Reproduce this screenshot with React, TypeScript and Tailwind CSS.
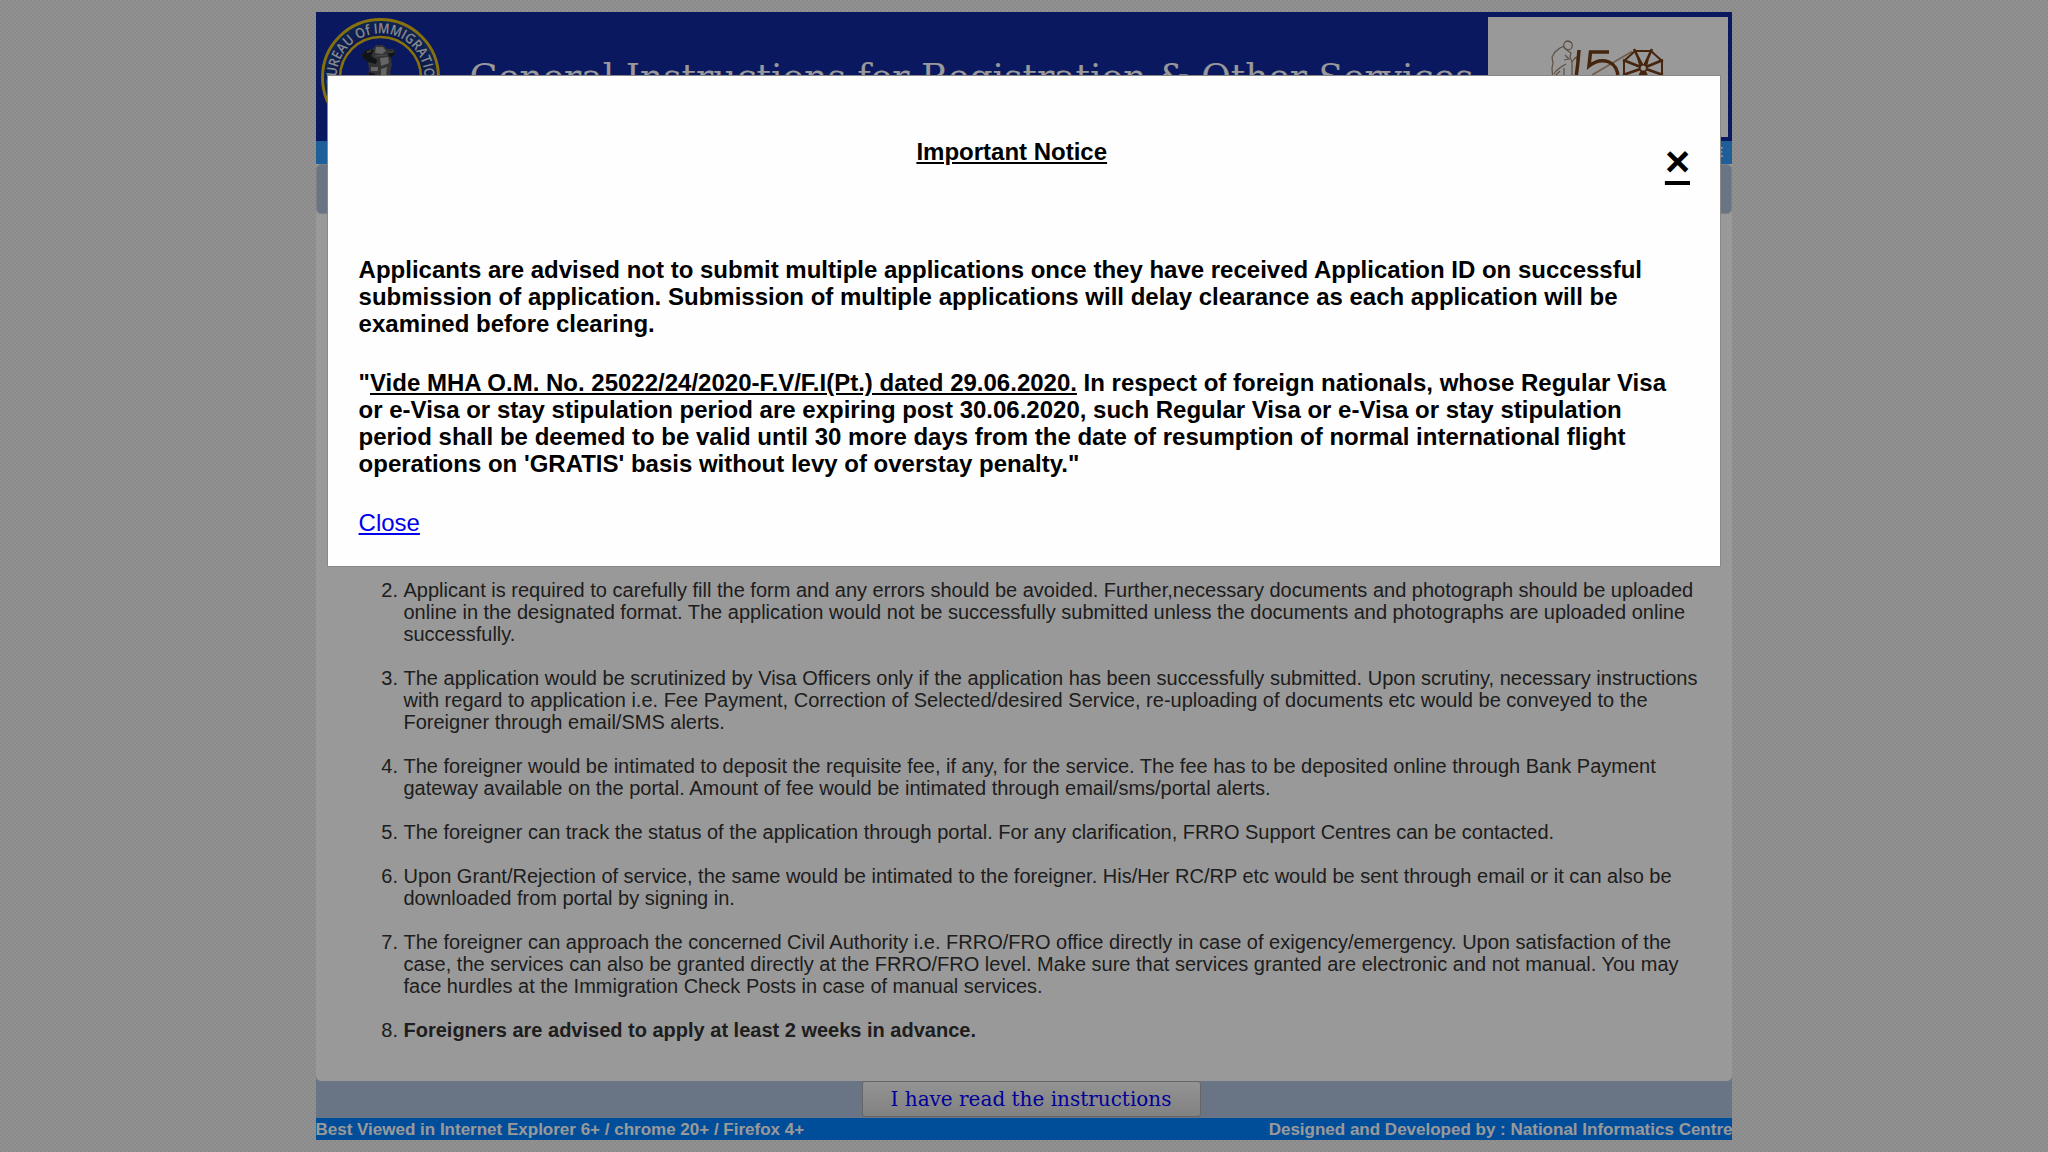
const items: { n: number; lines: string[]; bold?: boolean }[] = [
  { n: 2, lines: ["Applicant is required to carefully fill the form and any errors should be avoided. Further,necessary documents and photograph should be uploaded", "online in the designated format. The application would not be successfully submitted unless the documents and photographs are uploaded online", "successfully."] },
  { n: 3, lines: ["The application would be scrutinized by Visa Officers only if the application has been successfully submitted. Upon scrutiny, necessary instructions", "with regard to application i.e. Fee Payment, Correction of Selected/desired Service, re-uploading of documents etc would be conveyed to the", "Foreigner through email/SMS alerts."] },
  { n: 4, lines: ["The foreigner would be intimated to deposit the requisite fee, if any, for the service. The fee has to be deposited online through Bank Payment", "gateway available on the portal. Amount of fee would be intimated through email/sms/portal alerts."] },
  { n: 5, lines: ["The foreigner can track the status of the application through portal. For any clarification, FRRO Support Centres can be contacted."] },
  { n: 6, lines: ["Upon Grant/Rejection of service, the same would be intimated to the foreigner. His/Her RC/RP etc would be sent through email or it can also be", "downloaded from portal by signing in."] },
  { n: 7, lines: ["The foreigner can approach the concerned Civil Authority i.e. FRRO/FRO office directly in case of exigency/emergency. Upon satisfaction of the", "case, the services can also be granted directly at the FRRO/FRO level. Make sure that services granted are electronic and not manual. You may", "face hurdles at the Immigration Check Posts in case of manual services."] },
  { n: 8, lines: ["Foreigners are advised to apply at least 2 weeks in advance."], bold: true },
];

function Seal() {
  return (
    <svg className="ml-[5px] mt-[6px] h-[119px] w-[119px] shrink-0" viewBox="0 0 119 119">
      <defs>
        <path id="sealArc" d="M18.200 74.500 A44 44 0 1 1 100.800 74.500" />
        <radialGradient id="sealFill">
          <stop offset="0.7" stopColor="#14287f" />
          <stop offset="1" stopColor="#1c3f88" />
        </radialGradient>
        <filter id="soft"><feGaussianBlur stdDeviation="0.7" /></filter>
      </defs>
      <circle cx="59.500" cy="59.500" r="58" fill="url(#sealFill)" stroke="#e0bd18" strokeWidth="2.900" />
      <circle cx="59.500" cy="59.500" r="40.500" fill="#1228a0" stroke="#e0bd18" strokeWidth="2.600" />
      <text fill="#e2e6ee" fontFamily="Open Sans" fontWeight="600" fontSize="14">
        <textPath href="#sealArc" startOffset="50.8%" textAnchor="middle" textLength="156" lengthAdjust="spacingAndGlyphs">BUREAU Of IMMIGRATION</textPath>
      </text>
      <g filter="url(#soft)">
        <path d="M41 36 L46 31 L52 31 L55 27 L62 27 L66 31 L72 31 L75 35 L70 40 L71 47 L69 54 L71 62 L46 62 L48 52 L47 44 L42 40 Z" fill="#555" />
        <path d="M41 36 L46 31 L53 32 L50 38 L56 42 L55 46 L47 44 L42 40 Z M69 32 L75 35 L70 40 L67 37 Z M48 54 L54 56 L54 62 L46 62 Z" fill="#1d2027" />
        <path d="M55 29 L62 29 L65 33 L61 36 L54 35 Z M59 40 L67 39 L68 45 L60 48 Z M50 49 L57 49 L57 53 L50 53 Z M60 51 L66 49 L65 58 L60 58 Z" fill="#a8a8a8" />
        <path d="M46 34 L50 33 M68 34 L72 34 M54 38 L66 37" stroke="#777" strokeWidth="1.500" fill="none" />
      </g>
    </svg>
  );
}

function Anniversary() {
  return (
    <svg className="h-[120px] w-[240px]" viewBox="0 0 240 120">
      <g fill="none" stroke="#9b846f" strokeWidth="1.200">
        <circle cx="80" cy="28.500" r="4.300" />
        <path d="M77 24.500 L80 24 L84 26 M76 29 L72 31 L67 35 L64 40 L65 46 L64 51 L64.500 58 M76 30 L80 34 L83 36 L82 40 L84 45 L84 58 M84 45 L87 41 L92 38 M87 41 L91 43 M77 38 L81 42 L76 43 M78 47 L73 50 L68 54 L66 57 M76 51 L76 58 M72 54 L67 59" />
      </g>
      <path d="M104 58 L144 34.500" stroke="#ba9d80" strokeWidth="1.700" />
      <path d="M91 33 Q90 47 88 61 M121 35 H102.500 L101 49 Q111 41 121 45 Q130 49 130 61" fill="none" stroke="#763f1a" strokeWidth="3.500" />
      <g fill="none" stroke="#763f1a" strokeWidth="2">
        <path d="M147 34 H163 L174 44 V57 L163 69 H147 L136 57 V44 Z" />
        <path d="M146 32 L155.300 51 L164 32 M135 43 L155.300 51 L175 43 M135 58 L155.300 51 L175 58 M155.300 51 L147 69 M155.300 51 L163 69" strokeWidth="2.600" />
      </g>
      <path d="M147.500 35 L151.500 50 L155.500 47.500 Z M162.500 35 L155.500 47.500 L159 50 Z M154 53 L149 65 H162 L157 53 Z" fill="#763f1a" />
      <circle cx="155.300" cy="51" r="4" fill="#763f1a" />
      <circle cx="155.300" cy="51" r="2.600" fill="white" />
    </svg>
  );
}

export default function App() {
  return (
    <div className="relative h-[1152px] w-full overflow-hidden bg-[#efefef] bg-[repeating-conic-gradient(#e6e6e6_0_25%,#f3f3f3_0_50%)] bg-[length:4px_4px] pt-[12px] font-['Liberation_Sans',sans-serif]">
      <div className="mx-auto flex w-[1416px] flex-col">
        <header className="flex h-[129px] bg-[#1228a0]">
          <Seal />
          <h1 className="ml-[29.500px] mt-[43px] w-[1018.500px] shrink-0 whitespace-nowrap font-['DejaVu_Serif',serif] text-[36px] leading-[44px] text-white">
            General Instructions for Registration &amp; Other Services
          </h1>
          <div className="mt-[5px] h-[120px] w-[240px] shrink-0 bg-white">
            <Anniversary />
          </div>
        </header>
        <nav className="flex h-[23px] items-center justify-end bg-[#329dff] pr-[9px] text-[14px] font-bold text-white">HOME</nav>
        <div className="h-[917px] bg-[#b0c4de]">
          <div className="h-[50px] bg-white">
            <div className="h-[50px] rounded-[5px] border border-[#d4d4d4] bg-[#b0c4de]" />
          </div>
          <main className="h-[867px] rounded-b-[5px] bg-white pt-[365px]">
            <ol className="flex flex-col gap-[22px] text-[20px] leading-[22px] text-[#333]">
              {items.map((item) => (
                <li key={item.n} className="flex">
                  <span className="w-[87.500px] shrink-0 pr-[5.500px] text-right">{item.n}.</span>
                  <div className={item.bold ? "whitespace-nowrap font-bold" : "whitespace-nowrap"}>
                    {item.lines.map((line) => <p key={line}>{line}</p>)}
                  </div>
                </li>
              ))}
            </ol>
          </main>
        </div>
        <div className="flex h-[37px] justify-center bg-[#b0c4de] pl-[15px]">
          <button className="h-[36px] w-[339px] rounded-[3px] border border-[#a9a9a9] bg-linear-to-b from-[#f6f6f6] to-[#d8d8d8] pr-px font-['DejaVu_Serif',serif] text-[20px] leading-[34px] text-[#0000ff]">I have read the instructions</button>
        </div>
        <footer className="flex h-[22px] justify-between bg-[#0080ff] text-[17px] leading-[23px] font-bold text-white">
          <span className="-ml-[0.500px]">Best Viewed in Internet Explorer 6+ / chrome 20+ / Firefox 4+</span>
          <span className="-mr-[0.500px]">Designed and Developed by : National Informatics Centre</span>
        </footer>
      </div>

      <div className="absolute inset-0 bg-black/40" />

      <section className="absolute left-[327px] top-[75px] h-[492px] w-[1394px] border border-[#888] bg-[#fefefe] bg-clip-padding pr-[30px] pl-[30.600px] text-[24px] leading-[27px] text-black">
        <div className="flex h-[162px] items-start pt-[62px]">
          <h2 className="ml-[557.800px] w-[192px] whitespace-nowrap font-bold underline">Important Notice</h2>
          <a className="ml-auto -mt-[1px] text-[43px] leading-[48px] font-bold underline decoration-[4px] underline-offset-[5px]">×</a>
        </div>
        <div className="mt-[18px] whitespace-nowrap font-bold">
          <p>Applicants are advised not to submit multiple applications once they have received Application ID on successful</p>
          <p>submission of application. Submission of multiple applications will delay clearance as each application will be</p>
          <p>examined before clearing.</p>
        </div>
        <div className="mt-[32px] whitespace-nowrap font-bold">
          <p>"<u>Vide MHA O.M. No. 25022/24/2020-F.V/F.I(Pt.) dated 29.06.2020.</u> In respect of foreign nationals, whose Regular Visa</p>
          <p>or e-Visa or stay stipulation period are expiring post 30.06.2020, such Regular Visa or e-Visa or stay stipulation</p>
          <p>period shall be deemed to be valid until 30 more days from the date of resumption of normal international flight</p>
          <p>operations on 'GRATIS' basis without levy of overstay penalty."</p>
        </div>
        <a className="mt-[32px] block text-[#0000ee] underline">Close</a>
      </section>
    </div>
  );
}
